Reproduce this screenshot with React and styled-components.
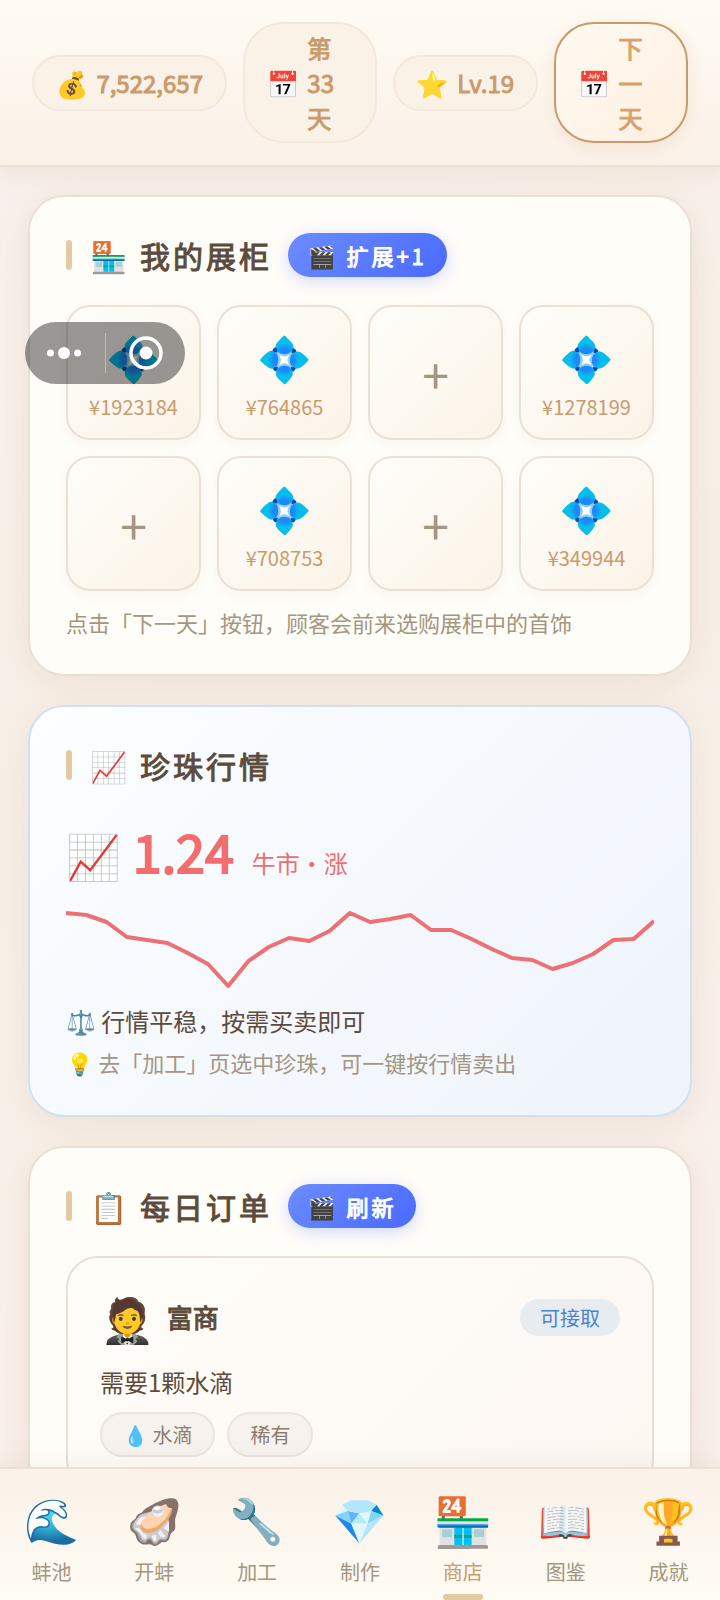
import React from "react";
import styled, { createGlobalStyle, css } from "styled-components";

const GlobalStyle = createGlobalStyle`
  *, *::before, *::after { box-sizing: border-box; }
  body {
    margin: 0;
    background: #f7eee8;
    color: #5c4b3c;
    font-family: "Noto Sans CJK SC", "Noto Color Emoji", sans-serif;
    font-size: 24px;
  }
  button { font: inherit; color: inherit; cursor: pointer; }
  h1, h2, h3, p, ul { margin: 0; padding: 0; }
  ul { list-style: none; }
`;

const heavy = css`
  font-weight: 400;
  -webkit-text-stroke: 1px currentColor;
`;

const Shell = styled.div`
  height: 100vh;
  display: flex;
  flex-direction: column;
  background: linear-gradient(160deg, #f8f0ec 0%, #f7efe7 45%, #f9f0ec 100%);
`;

const TopBar = styled.header`
  display: flex;
  align-items: center;
  gap: 16px;
  padding: 22px 32px;
  border-bottom: 2px solid #ece0d6;
  background: linear-gradient(180deg, #fffbf4 0%, #faf1e8 100%);
  box-shadow: 0 4px 24px rgba(180, 140, 110, 0.16);
  z-index: 1;
`;

const pill = css`
  ${heavy}
  display: flex;
  align-items: center;
  gap: 8px;
  padding: 6px 22px;
  border: 2px solid #f3e8db;
  border-radius: 40px;
  background: #faf2e7;
  color: #c99b6d;
  font-size: 24px;
  line-height: 35px;
  text-align: left;
`;

const Stat = styled.div`
  ${pill}
  flex: ${(p) => (p.$grow ? "1 1 0" : "none")};
`;

const NextDay = styled.button`
  ${pill}
  flex: 1 1 0;
  border-color: #c89a70;
  background: linear-gradient(135deg, #fffaf2 0%, #feefdf 100%);
  color: #d8a06c;
  box-shadow: 0 4px 16px rgba(212, 165, 116, 0.2);
`;

const PillIcon = styled.span`
  font-size: 26px;
  line-height: 40px;
`;

const Main = styled.main`
  flex: 1;
  min-height: 0;
  overflow-y: auto;
  scrollbar-width: none;
  display: flex;
  flex-direction: column;
  gap: 29px;
  padding: 28px;
`;

const Card = styled.section`
  flex: none;
  padding: 36px;
  border: 2px solid ${(p) => (p.$cool ? "#d2e0ee" : "#e9dfd5")};
  border-radius: 36px;
  background: ${(p) =>
    p.$cool ? "linear-gradient(135deg, #fcfeff 0%, #eef3fc 100%)" : "#fffdf8"};
  box-shadow: 0 8px 32px rgba(180, 140, 110, 0.14);
`;

const CardHead = styled.div`
  display: flex;
  align-items: center;
  gap: 16px;
  height: 44px;
  margin-bottom: 28px;
`;

const Title = styled.h2`
  ${heavy}
  display: flex;
  align-items: center;
  gap: 18px;
  color: #5c4b3c;
  font-size: 30px;
  line-height: 44px;
  letter-spacing: 3px;
  white-space: nowrap;

  &::before {
    content: "";
    width: 6px;
    height: 30px;
    border-radius: 3px;
    background: #e5c9a0;
  }
`;

const AdButton = styled.button`
  ${heavy}
  height: 44px;
  padding: 0 20px;
  border: 0;
  border-radius: 22px;
  background: linear-gradient(135deg, #6b8cff 0%, #4a6aff 100%);
  color: #fff;
  font-size: 22px;
  letter-spacing: 3px;
  white-space: nowrap;
  box-shadow: 0 4px 16px rgba(77, 107, 255, 0.25);
`;

const Shelf = styled.div`
  display: grid;
  grid-template-columns: repeat(4, 1fr);
  gap: 16px;
`;

const Slot = styled.button`
  aspect-ratio: 1;
  display: flex;
  flex-direction: column;
  align-items: center;
  justify-content: center;
  padding: 0;
  border: 2px solid #eae0d6;
  border-radius: 24px;
  background: linear-gradient(135deg, #fffdf9 0%, #fbf3e8 100%);
  box-shadow: 0 4px 12px rgba(180, 140, 110, 0.08);
`;

const Gem = styled.span`
  font-size: 44px;
  line-height: 68px;
`;

const Price = styled.span`
  color: #c99b6d;
  font-size: 20px;
  line-height: 34px;
`;

const Plus = styled.span`
  color: #a39682;
  font-size: 48px;
  line-height: 64px;
`;

const Hint = styled.p`
  color: #a39682;
  font-size: 22px;
  line-height: 34px;
`;

const ShelfHint = styled(Hint)`
  margin-top: 16px;
  line-height: 31px;
`;

const Quote = styled.div`
  display: flex;
  align-items: baseline;
  gap: 12px;
  color: #f26d6e;
  line-height: 1;
`;

const QuoteIcon = styled.span`
  font-size: 44px;
`;

const QuoteValue = styled.strong`
  font-size: 52px;
  font-weight: 400;
  line-height: 72px;
  -webkit-text-stroke: 2px currentColor;
`;

const QuoteTrend = styled.span`
  margin-left: 6px;
  font-size: 24px;
`;

const Chart = styled.svg`
  display: block;
  width: 100%;
  height: 90px;
  margin: 16px 0 10px;
`;

const Advice = styled.p`
  margin-bottom: 6px;
  font-size: 24px;
  line-height: 36px;
`;

const Order = styled.article`
  padding: 30px 32px 32px;
  border: 2px solid #e9dfd5;
  border-radius: 32px;
  background: linear-gradient(135deg, #fffdf8 0%, #fdf7f2 100%);
`;

const OrderHead = styled.div`
  display: flex;
  align-items: center;
  gap: 12px;
  margin-bottom: 18px;
`;

const Avatar = styled.span`
  font-size: 44px;
  line-height: 58px;
`;

const Customer = styled.h3`
  ${heavy}
  flex: 1;
  font-size: 26px;
  line-height: 38px;
`;

const Badge = styled.span`
  padding: 0 20px;
  border-radius: 20px;
  background: #e8ebf0;
  color: #4a84cc;
  font-size: 20px;
  line-height: 37px;
`;

const Need = styled.p`
  font-size: 24px;
  line-height: 36px;
`;

const Tags = styled.ul`
  display: flex;
  gap: 12px;
  margin-top: 12px;
`;

const Tag = styled.li`
  padding: 0 21px;
  border: 2px solid #ece4dd;
  border-radius: 24px;
  background: #f7f2ee;
  color: #8b7d70;
  font-size: 20px;
  line-height: 41px;
`;

const TabBar = styled.nav`
  display: grid;
  grid-template-columns: repeat(7, 1fr);
  height: 133px;
  border-top: 2px solid #ece0d6;
  background: linear-gradient(180deg, #faf1e8 0%, #fffcf4 100%);
  box-shadow: 0 -4px 24px rgba(180, 140, 110, 0.1);
  z-index: 1;
`;

const Tab = styled.button`
  display: flex;
  flex-direction: column;
  align-items: center;
  padding: 18px 0 0;
  border: 0;
  background: none;
  color: ${(p) => (p.$active ? "#c99b6d" : "#a39682")};
  font-size: 20px;
  line-height: 32px;

  &::after {
    content: "";
    width: 40px;
    height: 6px;
    margin-top: 6px;
    border-radius: 3px;
    background: ${(p) => (p.$active ? "#e5c9a0" : "transparent")};
  }
`;

const TabIcon = styled.span`
  height: 62px;
  margin-bottom: 7px;
  font-size: ${(p) => (p.$active ? "48px" : "44px")};
  line-height: 62px;
`;

const Capsule = styled.div`
  position: fixed;
  left: 25px;
  top: 322px;
  display: flex;
  align-items: center;
  width: 160px;
  height: 62px;
  border-radius: 31px;
  background: rgba(0, 0, 0, 0.4);
  z-index: 2;
`;

const CapsuleButton = styled.button`
  flex: 1;
  height: 62px;
  padding: 0;
  border: 0;
  background: none;

  & + & {
    position: relative;
  }

  & + &::before {
    content: "";
    position: absolute;
    left: 0;
    top: 11px;
    width: 1px;
    height: 40px;
    background: rgba(255, 255, 255, 0.35);
  }

  svg { display: block; margin: 0 auto; }
`;

const slots = [1923184, 764865, null, 1278199, null, 708753, null, 349944];

const history = [
  23, 25, 32, 47, 50, 53, 63, 74, 96, 71, 57, 48, 51, 41, 23, 32, 29, 25, 40,
  40, 49, 59, 68, 70, 79, 73, 64, 50, 49, 31,
];

const tabs = [
  ["🌊", "蚌池"],
  ["🦪", "开蚌"],
  ["🔧", "加工"],
  ["💎", "制作"],
  ["🏪", "商店"],
  ["📖", "图鉴"],
  ["🏆", "成就"],
];

function PriceChart() {
  const step = 588 / (history.length - 1);
  const points = history.map((y, i) => `${(i * step).toFixed(1)},${y}`).join(" ");
  return (
    <Chart viewBox="0 13 588 90" preserveAspectRatio="none" role="img" aria-label="珍珠行情">
      <polyline
        points={points}
        fill="none"
        stroke="#ed7073"
        strokeWidth="4"
        strokeLinejoin="round"
        vectorEffect="non-scaling-stroke"
      />
    </Chart>
  );
}

export default function App() {
  return (
    <Shell>
      <GlobalStyle />
      <TopBar>
        <Stat>
          <PillIcon>💰</PillIcon>
          <span>7,522,657</span>
        </Stat>
        <Stat $grow>
          <PillIcon>📅</PillIcon>
          <span>第 33 天</span>
        </Stat>
        <Stat>
          <PillIcon>⭐</PillIcon>
          <span>Lv.19</span>
        </Stat>
        <NextDay>
          <PillIcon>📅</PillIcon>
          <span>下一天</span>
        </NextDay>
      </TopBar>

      <Main>
        <Card>
          <CardHead>
            <Title>🏪 我的展柜</Title>
            <AdButton>🎬 扩展+1</AdButton>
          </CardHead>
          <Shelf>
            {slots.map((price, i) => (
              <Slot key={i}>
                {price ? (
                  <>
                    <Gem>💠</Gem>
                    <Price>¥{price}</Price>
                  </>
                ) : (
                  <Plus>+</Plus>
                )}
              </Slot>
            ))}
          </Shelf>
          <ShelfHint>点击「下一天」按钮，顾客会前来选购展柜中的首饰</ShelfHint>
        </Card>

        <Card $cool>
          <CardHead>
            <Title>📈 珍珠行情</Title>
          </CardHead>
          <Quote>
            <QuoteIcon>📈</QuoteIcon>
            <QuoteValue>1.24</QuoteValue>
            <QuoteTrend>牛市・涨</QuoteTrend>
          </Quote>
          <PriceChart />
          <Advice>⚖️ 行情平稳，按需买卖即可</Advice>
          <Hint>💡 去「加工」页选中珍珠，可一键按行情卖出</Hint>
        </Card>

        <Card>
          <CardHead>
            <Title>📋 每日订单</Title>
            <AdButton>🎬 刷新</AdButton>
          </CardHead>
          <Order>
            <OrderHead>
              <Avatar>🤵</Avatar>
              <Customer>富商</Customer>
              <Badge>可接取</Badge>
            </OrderHead>
            <Need>需要1颗水滴</Need>
            <Tags>
              <Tag>💧 水滴</Tag>
              <Tag>稀有</Tag>
            </Tags>
          </Order>
        </Card>
      </Main>

      <TabBar>
        {tabs.map(([icon, label]) => (
          <Tab key={label} $active={label === "商店"}>
            <TabIcon $active={label === "商店"}>{icon}</TabIcon>
            <span>{label}</span>
          </Tab>
        ))}
      </TabBar>

      <Capsule>
        <CapsuleButton aria-label="更多">
          <svg width="36" height="14" viewBox="0 0 36 14" fill="#fff">
            <circle cx="3.5" cy="7" r="3.5" />
            <circle cx="17" cy="7" r="6" />
            <circle cx="30.5" cy="7" r="3.5" />
          </svg>
        </CapsuleButton>
        <CapsuleButton aria-label="关闭">
          <svg width="36" height="34" viewBox="0 0 36 34">
            <circle cx="19" cy="17" r="15" fill="none" stroke="#fff" strokeWidth="3.5" />
            <circle cx="19" cy="17" r="6.5" fill="#fff" />
          </svg>
        </CapsuleButton>
      </Capsule>
    </Shell>
  );
}
